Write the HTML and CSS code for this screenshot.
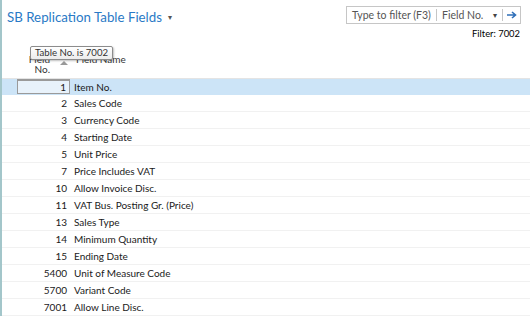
FILE: index.html
```html
<!DOCTYPE html>
<html lang="en">
  <head>
    <meta charset="UTF-8" />
    <title>SB Replication Table Fields</title>
    <link rel="stylesheet" href="styles.css">
  </head>
  <body>
    <div class="page">
      <div class="top">
        <h1 class="title">SB Replication Table Fields <span class="caret">&#9662;</span></h1>
        <div class="filter-box">
          <span class="filter-input">Type to filter (F3)</span>
          <span class="filter-field">Field No. <span class="small-caret">&#9662;</span></span>
          <span class="filter-go">
            <svg width="10" height="8" viewBox="0 0 10 8">
              <path d="M0 4 H8 M5 1 L8.5 4 L5 7" fill="none" stroke="#2f6fb8" stroke-width="1.6"/>
            </svg>
          </span>
        </div>
      </div>
      <div class="filter-info">Filter: 7002</div>

      <div class="list">
        <div class="head">
          <div class="h-no">Field<br>No.</div>
          <div class="h-name">Field Name</div>
          <span class="sort-mark"></span>
          <div class="tooltip">Table No. is 7002</div>
        </div>
        <div class="row selected"><div class="no">1</div><div class="name">Item No.</div></div>
        <div class="row"><div class="no">2</div><div class="name">Sales Code</div></div>
        <div class="row"><div class="no">3</div><div class="name">Currency Code</div></div>
        <div class="row"><div class="no">4</div><div class="name">Starting Date</div></div>
        <div class="row"><div class="no">5</div><div class="name">Unit Price</div></div>
        <div class="row"><div class="no">7</div><div class="name">Price Includes VAT</div></div>
        <div class="row"><div class="no">10</div><div class="name">Allow Invoice Disc.</div></div>
        <div class="row"><div class="no">11</div><div class="name">VAT Bus. Posting Gr. (Price)</div></div>
        <div class="row"><div class="no">13</div><div class="name">Sales Type</div></div>
        <div class="row"><div class="no">14</div><div class="name">Minimum Quantity</div></div>
        <div class="row"><div class="no">15</div><div class="name">Ending Date</div></div>
        <div class="row"><div class="no">5400</div><div class="name">Unit of Measure Code</div></div>
        <div class="row"><div class="no">5700</div><div class="name">Variant Code</div></div>
        <div class="row"><div class="no">7001</div><div class="name">Allow Line Disc.</div></div>
      </div>
    </div>
  </body>
</html>
```

FILE: styles.css
```css
* {
  box-sizing: border-box;
}

body {
  margin: 0;
  background: #fff;
  font-family: Lato, "Liberation Sans", sans-serif;
  font-size: 10px;
  color: #1a1a1a;
  overflow: hidden;
}

.page {
  border-left: 2px solid #a3c6ca;
  height: 316px;
}

.top {
  display: flex;
  justify-content: space-between;
  align-items: flex-start;
  height: 24px;
  padding: 6px 9px 0 5px;
}

.title {
  margin: 1px 0 0;
  font-size: 13.3px;
  font-weight: normal;
  color: #2a7ac6;
  line-height: 20px;
}

.caret {
  font-size: 8px;
  color: #555;
  vertical-align: 2px;
  margin-left: 3px;
}

.filter-box {
  display: flex;
  align-items: center;
  width: 175px;
  height: 18px;
  border: 1px solid #c6c6c6;
  font-size: 10.5px;
  color: #555;
}

.filter-input {
  width: 90px;
  padding-left: 5px;
  border-right: 1px solid #c6c6c6;
  line-height: 12px;
}

.filter-field {
  flex: 1;
  padding-left: 5px;
  border-right: 1px solid #c6c6c6;
  line-height: 12px;
  display: flex;
  justify-content: space-between;
  padding-right: 5px;
}

.small-caret {
  font-size: 8px;
  color: #444;
}

.filter-go {
  width: 17px;
  display: flex;
  justify-content: center;
}

.filter-info {
  text-align: right;
  padding-right: 10px;
  margin-top: 4px;
  line-height: 12px;
  font-size: 9.4px;
  color: #000;
}

.head {
  position: relative;
  display: flex;
  height: 38px;
  padding-top: 14px;
  color: #333;
  line-height: 10px;
}

.h-no {
  width: 68px;
  text-align: right;
  padding-right: 20px;
}

.h-name {
  padding-left: 6px;
}

.sort-mark {
  position: absolute;
  left: 58px;
  top: 21px;
  border-left: 4px solid transparent;
  border-right: 4px solid transparent;
  border-bottom: 4px solid #999;
}

.tooltip {
  position: absolute;
  left: 28px;
  top: 6px;
  height: 14px;
  padding: 0 4px;
  border: 1px solid #8c8c8c;
  border-radius: 2px;
  background: linear-gradient(#ffffff, #ececec);
  box-shadow: 1px 1px 2px rgba(0, 0, 0, 0.25);
  font-size: 9.6px;
  line-height: 12px;
  color: #333;
}

.row {
  display: flex;
  height: 17px;
  line-height: 16px;
  border-bottom: 1px solid #f1f1f1;
}

.row .no {
  width: 68px;
  text-align: right;
  padding-right: 3px;
}

.row .name {
  padding-left: 4px;
}

.row.selected {
  background: #cce4f7;
  border-top: 1px solid #e4e4e4;
  border-bottom-color: #cce4f7;
}

.row.selected .no {
  margin-left: 15px;
  width: 53px;
  background: #e8f2fb;
  border: 1px solid #9a9a9a;
  border-top: 2px solid #9a9a9a;
  line-height: 13px;
}
```
